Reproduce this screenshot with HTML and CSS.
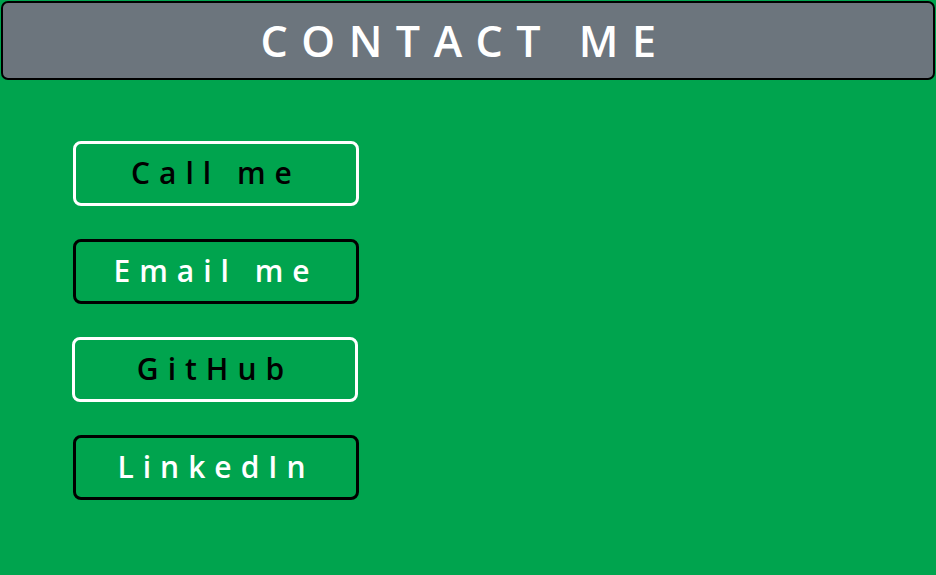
FILE: index.html
```html
<!DOCTYPE html>
<html>
<head>
<meta charset="utf-8">
<link rel="stylesheet" href="styles.css">
</head>
<body>
<header class="title-bar"><h1 class="title">CONTACT ME</h1></header>
<main class="links">
  <a class="btn btn-light" href="#">Call me</a>
  <a class="btn btn-dark" href="#">Email me</a>
  <a class="btn btn-light btn-shift" href="#">GitHub</a>
  <a class="btn btn-dark" href="#">LinkedIn</a>
</main>
</body>
</html>
```
FILE: styles.css
```css
html, body {
  margin: 0;
  padding: 0;
  background: #00a44e;
  height: 100%;
  font-family: "Open Sans", "Liberation Sans", sans-serif;
}
body {
  padding-top: 1px;
  box-sizing: border-box;
}
.title-bar {
  margin: 0 1px;
  height: 79px;
  box-sizing: border-box;
  background: #6c757d;
  border: 2px solid #000;
  border-radius: 7px;
  display: flex;
  align-items: center;
  justify-content: center;
}
.title {
  margin: 0;
  color: #fff;
  font-size: 43px;
  font-weight: 600;
  letter-spacing: 13.5px;
  padding-right: 6px;
  line-height: 1;
}
.links {
  display: flex;
  flex-direction: column;
  align-items: flex-start;
  gap: 33px;
  padding: 61px 0 0 73px;
}
.btn {
  width: 286px;
  height: 65px;
  box-sizing: border-box;
  border: 3px solid;
  border-radius: 8px;
  display: flex;
  align-items: center;
  justify-content: center;
  text-decoration: none;
  font-size: 30px;
  font-weight: 550;
  letter-spacing: 9px;
  padding-bottom: 2px;
}
.btn-light {
  border-color: #fff;
  color: #000;
}
.btn-dark {
  border-color: #000;
  color: #fff;
}
.btn-shift {
  margin-left: -1px;
}
```
